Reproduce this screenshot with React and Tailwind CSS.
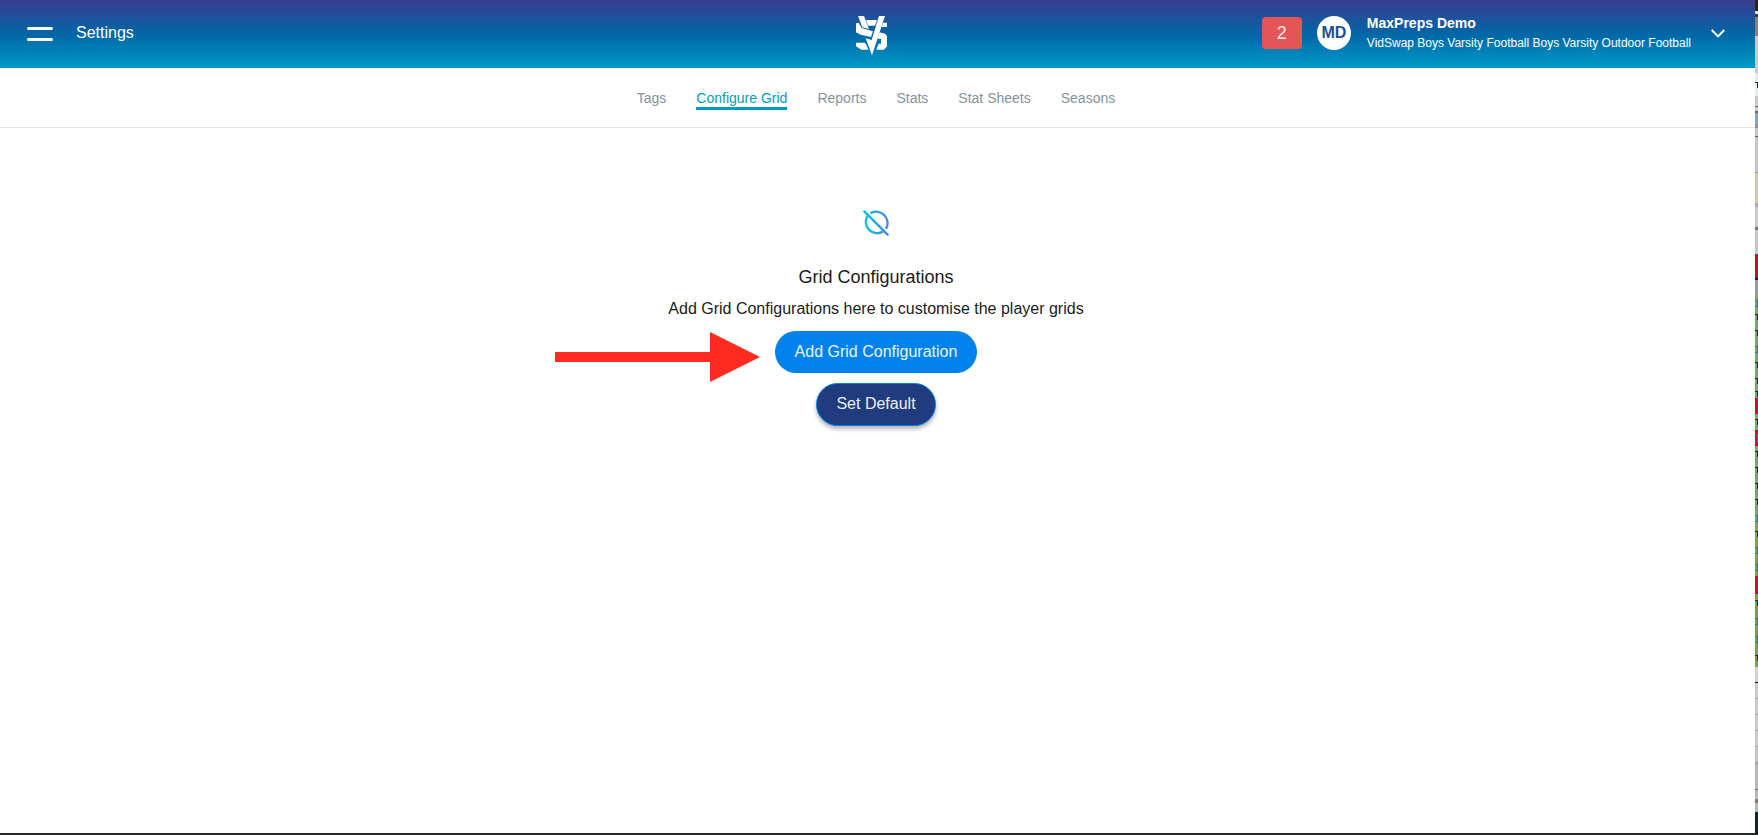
import React, { useState } from 'react';
import clsx from 'clsx';

const tabs = ["Tags", "Configure Grid", "Reports", "Stats", "Stat Sheets", "Seasons"];

// slices of the spreadsheet window that peeks out on the right: [height, colour, mark]
const slices = [
    [11, "#33231f"], [3, "#dcdcdc"], [3, "#2f3a45"], [19, "#87827f"], [37, "#c9c9c9"],
    [7, "#ececec"], [9, "#ececec", "tick"], [7, "#ececec"], [10, "#c9c9c9"], [1, "#6b6b6b"], [4, "#c9c9c9"],
    [2, "#6b6b6b"], [11, "#7fa9c6"], [4, "#8f8f8f"], [8, "#c4c4c4"], [1, "#5a5a5a"],
    [35, "#c4c4c4"], [1, "#9a9a9a"], [30, "#d3c9b1"], [4, "#a8a8a8"],
    [20, "#cacaca"], [3, "#777777"], [24, "#c4c4c4"], [1, "#555555"],
    [23, "#cf0a24"], [2, "#1c1c1c"], [17, "#9b9b9b"],
    [12, "#6fad67", "box"], [16, "#6fad67", "tick"], [16, "#6fad67", "tick"], [16, "#6fad67", "box"],
    [16, "#6fad67", "tick"], [16, "#6fad67", "tick"], [9, "#6fad67", "tick"],
    [16, "#dc0524"], [16, "#6fad67", "tick"], [16, "#dc0524", "box"],
    [16, "#6fad67", "tick"], [16, "#6fad67", "tick"], [16, "#6fad67", "tick"], [16, "#6fad67", "tick"],
    [16, "#6fad67", "box"], [16, "#79a945", "tick"], [16, "#79a945", "box"], [18, "#70a648", "box"],
    [18, "#dc0524"], [18, "#70a648", "tick"], [18, "#70a648", "box"], [18, "#70a648", "box"],
    [19, "#70a648", "tick"], [15, "#d2d2d2"], [1, "#111111"], [15, "#cacaca"], [1, "#a3a3a3"],
    [15, "#cacaca"], [1, "#a3a3a3"], [15, "#cacaca"], [1, "#a3a3a3"], [15, "#cacaca"], [1, "#a3a3a3"],
    [15, "#c4c4c4"], [2, "#a3a3a3"], [25, "#b8b8b8"], [1, "#6b6b6b"], [9, "#b8b8b8"],
    [4, "#7c7c7c"], [9, "#b8b8b8"],
];

function Logo() {
    return (
        <svg className="mt-1 mr-2.5" width="31" height="40" viewBox="0 0 93 120" fill="#fff" aria-label="VidSwap" role="img">
            {/* V */}
            <path d="M6 0h18l15 39-20-5z" />
            <path d="M69 0h18L48 118 29 67l18 5z" />
            {/* S */}
            <path d="M30 12h33l-6 17H36z" />
            <path d="M82 20h11v13H77z" />
            <path d="M0 22l8-2 9 16 34 10-6 17L14 56 0 49z" />
            <path d="M71 49l16 4 6 7v31l-9 10H61l7-18h7V68H64z" />
            <path d="M0 80h25l5 4 7 17H16L0 91z" />
        </svg>
    );
}

function Header() {
    return (
        <header className="grid grid-cols-[1fr_auto_1fr] items-center h-[68px] pl-[27px] pr-[30px] text-white bg-[linear-gradient(to_bottom,#3b3c90_0%,#0068a7_52%,#009bc8_100%)]">
            <div className="flex items-center gap-[23px]">
                <button type="button" aria-label="Menu" className="flex flex-col gap-2">
                    <span className="w-[26px] h-[3px] rounded-xs bg-white" />
                    <span className="w-[26px] h-[3px] rounded-xs bg-white" />
                </button>
                <h1 className="text-base pb-0.5">Settings</h1>
            </div>
            <Logo />
            <div className="flex items-center justify-end pb-0.5">
                <button type="button" className="w-10 h-8 rounded-sm bg-[#e35557] text-lg text-[#f8e6e6]">2</button>
                <span className="flex items-center justify-center size-[34px] ml-[15px] rounded-full bg-white text-base font-bold text-[#1c4f93]">
                    MD
                </span>
                <div className="ml-4">
                    <p className="text-sm font-bold">MaxPreps Demo</p>
                    <p className="text-xs leading-5">VidSwap Boys Varsity Football Boys Varsity Outdoor Football</p>
                </div>
                <button type="button" aria-label="Switch team" className="ml-5">
                    <svg width="14" height="9" viewBox="0 0 14 9" fill="none" stroke="#fff" strokeWidth="2">
                        <path d="M.7 1L7 7.4 13.3 1" />
                    </svg>
                </button>
            </div>
        </header>
    );
}

function EmptyIcon() {
    return (
        <svg width="26" height="26" viewBox="0 0 26 26" fill="none" stroke="url(#ring)" strokeWidth="2.4" strokeLinecap="round">
            <defs>
                <linearGradient id="ring" gradientUnits="userSpaceOnUse" x1="0" y1="0" x2="26" y2="0">
                    <stop offset="0" stopColor="#00c9dc" />
                    <stop offset="1" stopColor="#4a86e0" />
                </linearGradient>
            </defs>
            <path d="M1.4 1.4l23.2 23.2" />
            <path d="M8.2 2.8A11.4 11.4 0 0 1 23.4 18" />
            <path d="M4.9 5.2A11.4 11.4 0 0 0 20.8 21.1" />
        </svg>
    );
}

function Arrow() {
    return (
        <svg className="absolute right-full top-px mr-[15px]" width="205" height="50" viewBox="0 0 205 50" fill="#ff2a20">
            <path d="M0 20h155V0l50 25-50 25V30H0z" />
        </svg>
    );
}

function Mark({ type }) {
    if (type === "box") {
        return <span className="w-full h-[7px] border border-l-0 border-[#34788a]" />;
    }
    if (type === "tick") {
        return <span className="w-full h-1.5 border-t border-r border-[#16301a]" />;
    }
    return null;
}

function App() {
    const [active, setActive] = useState("Configure Grid");

    return (
        <div className="flex min-h-screen bg-white font-['Liberation_Sans',Arial,sans-serif]">
            <div className="flex flex-col flex-1 border-b-2 border-[#27272b]">
                <Header />
                <nav className="flex justify-center gap-[30px] h-[60px] pt-5 pr-[3px] border-b border-[#e2e2e4]">
                    {tabs.map((tab) => (
                        <button
                            key={tab}
                            type="button"
                            onClick={() => setActive(tab)}
                            className={clsx(
                                "h-[22px] text-sm leading-5 border-b-3",
                                tab === active ? "text-[#009cc8] border-[#009cc8]" : "text-[#8592a2] border-transparent"
                            )}
                        >
                            {tab}
                        </button>
                    ))}
                </nav>
                <main className="flex flex-col items-center pt-[82px] pr-[3px] text-[#1b1b1d]">
                    <EmptyIcon />
                    <h2 className="mt-[27px] text-lg">Grid Configurations</h2>
                    <p className="mt-1.5 text-base">Add Grid Configurations here to customise the player grids</p>
                    <div className="relative mt-2.5">
                        <button type="button" className="h-[42px] px-5 rounded-full bg-[#0081eb] text-base text-[#eaf5ff]">
                            Add Grid Configuration
                        </button>
                        <Arrow />
                    </div>
                    <button type="button" className="h-[43px] mt-2.5 px-[19px] pb-0.5 rounded-full border border-[#0081eb] bg-[#203c7e] text-base text-[#eceef4] shadow-[0_3px_4px_rgba(0,0,0,0.3)]">
                        Set Default
                    </button>
                </main>
            </div>
            <div className="flex flex-col w-[3px] bg-[#14262b]" aria-hidden="true">
                {slices.map(([height, color, mark], i) => (
                    <div key={i} className="flex items-center shrink-0" style={{ height, backgroundColor: color }}>
                        <Mark type={mark} />
                    </div>
                ))}
            </div>
        </div>
    );
}

export default App;
